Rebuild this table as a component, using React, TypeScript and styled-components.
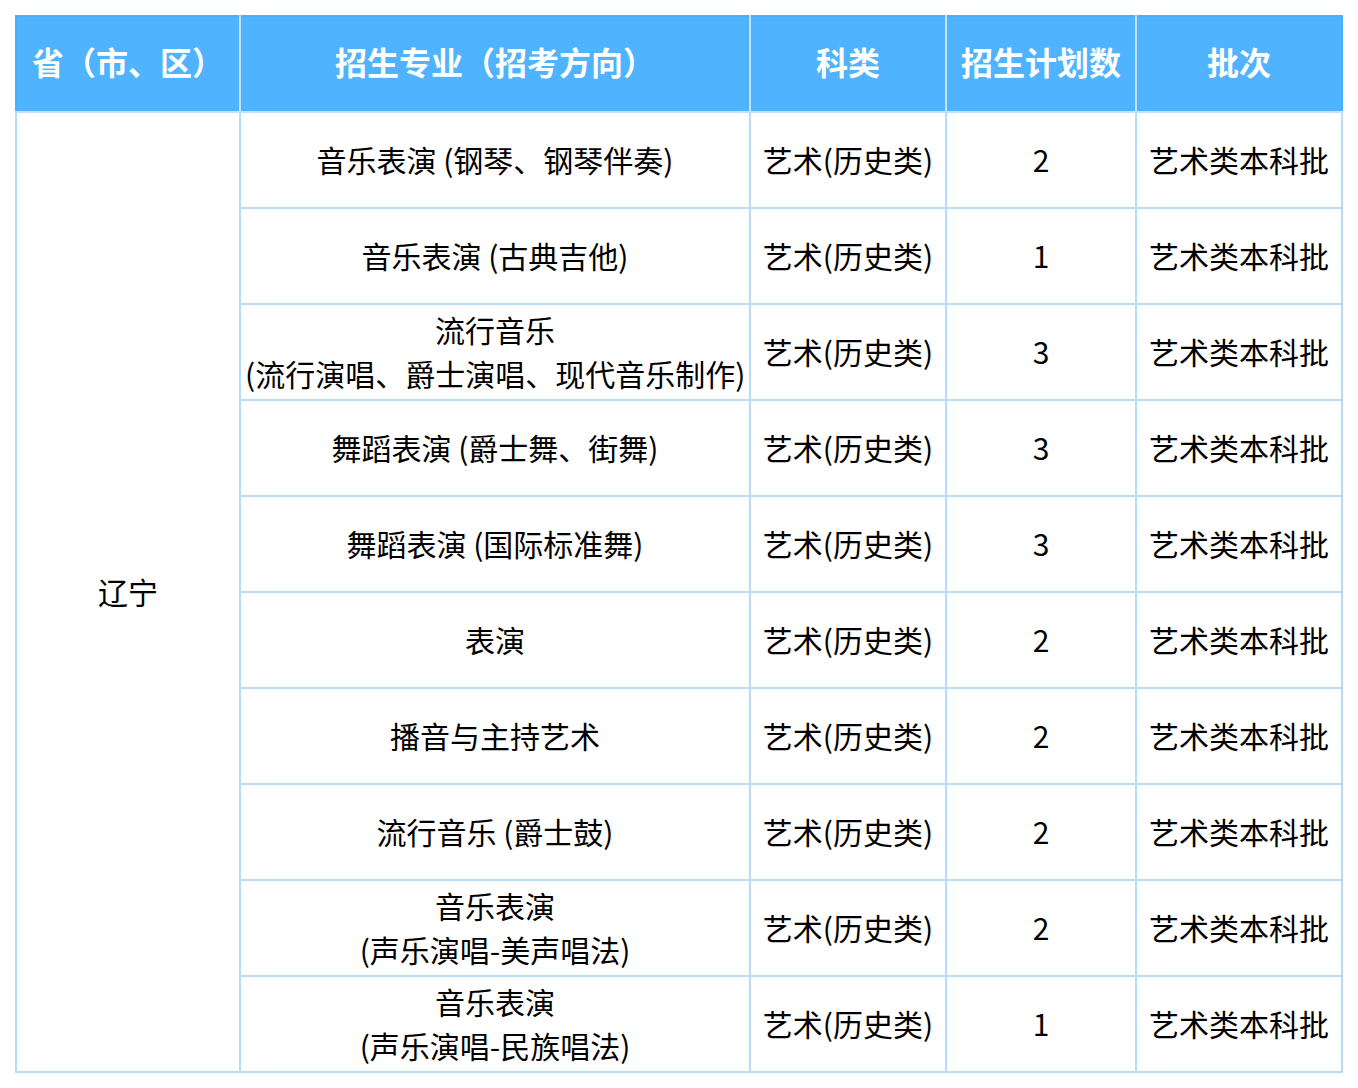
import React from "react";
import styled, { createGlobalStyle } from "styled-components";

const GlobalStyle = createGlobalStyle`
  html, body {
    margin: 0;
    padding: 0;
    background: #ffffff;
  }
  body {
    font-family: "Microsoft YaHei", "Noto Sans CJK SC", "Noto Sans", sans-serif;
  }
`;

type Row = {
  major: string[];
  category: string;
  plan: number;
  batch: string;
};

const rows: Row[] = [
  { major: ["音乐表演 (钢琴、钢琴伴奏)"], category: "艺术(历史类)", plan: 2, batch: "艺术类本科批" },
  { major: ["音乐表演 (古典吉他)"], category: "艺术(历史类)", plan: 1, batch: "艺术类本科批" },
  {
    major: ["流行音乐", "(流行演唱、爵士演唱、现代音乐制作)"],
    category: "艺术(历史类)",
    plan: 3,
    batch: "艺术类本科批",
  },
  { major: ["舞蹈表演 (爵士舞、街舞)"], category: "艺术(历史类)", plan: 3, batch: "艺术类本科批" },
  { major: ["舞蹈表演 (国际标准舞)"], category: "艺术(历史类)", plan: 3, batch: "艺术类本科批" },
  { major: ["表演"], category: "艺术(历史类)", plan: 2, batch: "艺术类本科批" },
  { major: ["播音与主持艺术"], category: "艺术(历史类)", plan: 2, batch: "艺术类本科批" },
  { major: ["流行音乐 (爵士鼓)"], category: "艺术(历史类)", plan: 2, batch: "艺术类本科批" },
  {
    major: ["音乐表演", "(声乐演唱-美声唱法)"],
    category: "艺术(历史类)",
    plan: 2,
    batch: "艺术类本科批",
  },
  {
    major: ["音乐表演", "(声乐演唱-民族唱法)"],
    category: "艺术(历史类)",
    plan: 1,
    batch: "艺术类本科批",
  },
];

// column widths as measured on the sheet
const columns = [224, 510, 196, 190, 206];

const App = () => {
  return (
    <Page>
      <GlobalStyle />
      <Table>
        <colgroup>
          {columns.map((w, i) => (
            <col key={i} style={{ width: w }} />
          ))}
        </colgroup>
        <thead>
          <HeadRow>
            <HeadCell>省（市、区）</HeadCell>
            <HeadCell>招生专业（招考方向）</HeadCell>
            <HeadCell>科类</HeadCell>
            <HeadCell>招生计划数</HeadCell>
            <HeadCell>批次</HeadCell>
          </HeadRow>
        </thead>
        <tbody>
          {rows.map((row, i) => (
            <BodyRow key={i}>
              {i === 0 && <Cell rowSpan={rows.length}>辽宁</Cell>}
              <Cell>
                {row.major.map((line, j) => (
                  <Line key={j}>{line}</Line>
                ))}
              </Cell>
              <Cell>{row.category}</Cell>
              <Cell>{row.plan}</Cell>
              <Cell>{row.batch}</Cell>
            </BodyRow>
          ))}
        </tbody>
      </Table>
    </Page>
  );
};

export default App;

const Page = styled.div`
  padding: 15px 15px 16px 15px;
`;

const Table = styled.table`
  width: 1326px;
  table-layout: fixed;
  border-collapse: collapse;
  border: 2px solid #4eaef6;
`;

const HeadRow = styled.tr`
  height: 96px;
  background: #50b3ff;
`;

const HeadCell = styled.th`
  padding: 0 4px 7px 4px;
  border: 2px solid #c2e2fb;
  border-top: none;
  color: #ffffff;
  font-size: 32px;
  font-weight: 700;
  text-align: center;
  vertical-align: middle;
  white-space: nowrap;

  &:first-child {
    border-left: none;
  }
  &:last-child {
    border-right: none;
  }
`;

const BodyRow = styled.tr`
  height: 96px;
`;

const Cell = styled.td`
  padding: 0 4px 3px 4px;
  border: 2px solid #b6ddfa;
  color: #000000;
  font-size: 30px;
  line-height: 44px;
  text-align: center;
  vertical-align: middle;
  white-space: nowrap;
`;

const Line = styled.div`
  line-height: 44px;
`;
